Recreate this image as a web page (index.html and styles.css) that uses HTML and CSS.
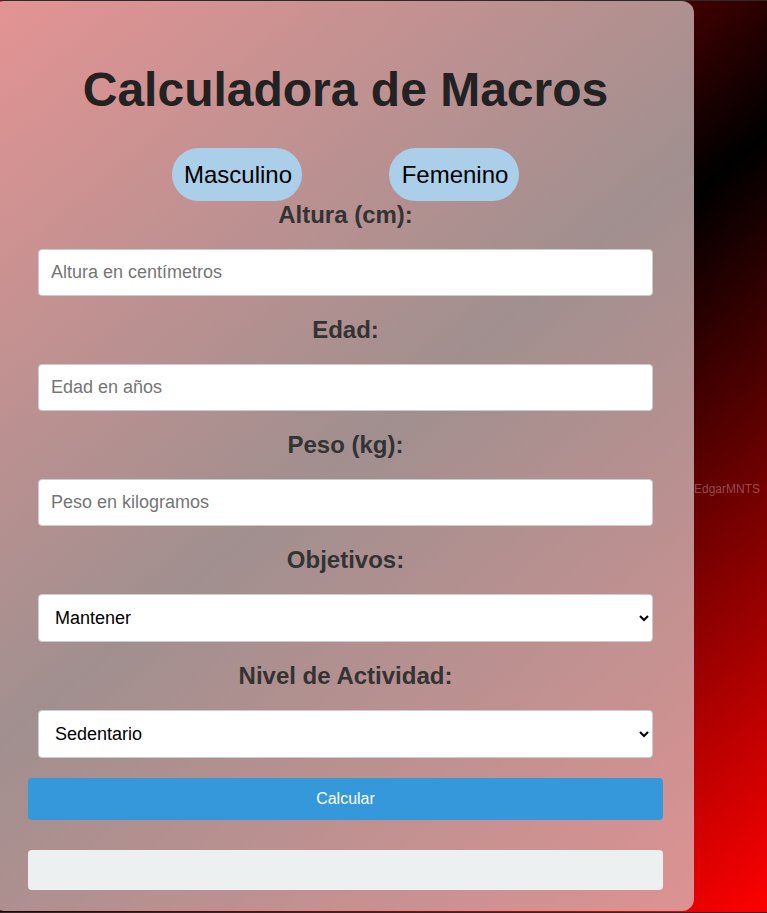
FILE: index.html
```html
<!DOCTYPE html>
<html lang="es">
<head>
<meta charset="utf-8">
<title>Calculadora de Macros</title>
<link rel="stylesheet" href="styles.css">
</head>
<body>
<div class="page">
  <main class="card">
    <h1 class="title">Calculadora de Macros</h1>
    <div class="gender">
      <button class="pill" type="button">Masculino</button>
      <button class="pill" type="button">Femenino</button>
    </div>
    <label class="label" for="altura">Altura (cm):</label>
    <input class="field" id="altura" type="number" placeholder="Altura en centímetros">
    <label class="label" for="edad">Edad:</label>
    <input class="field" id="edad" type="number" placeholder="Edad en años">
    <label class="label" for="peso">Peso (kg):</label>
    <input class="field" id="peso" type="number" placeholder="Peso en kilogramos">
    <label class="label" for="objetivo">Objetivos:</label>
    <select class="field select" id="objetivo">
      <option>Mantener</option>
      <option>Perder peso</option>
      <option>Ganar músculo</option>
    </select>
    <label class="label" for="actividad">Nivel de Actividad:</label>
    <select class="field select" id="actividad">
      <option>Sedentario</option>
      <option>Ligero</option>
      <option>Moderado</option>
      <option>Intenso</option>
    </select>
    <button class="calc" type="button">Calcular</button>
    <div class="result"></div>
  </main>
  <div class="credit">EdgarMNTS</div>
</div>
</body>
</html>
```
FILE: styles.css
```css
* {
  box-sizing: border-box;
}

html, body {
  margin: 0;
  padding: 0;
}

body {
  background: #2b2b2b;
  padding: 1px 0;
  font-family: "Liberation Sans", Arial, sans-serif;
  overflow: hidden;
}

.page {
  height: 911px;
  display: flex;
  align-items: flex-start;
  background: linear-gradient(140deg, #ff0000 0%, #000000 50%, #ff0000 100%);
}

.card {
  flex: none;
  width: 702px;
  height: 910px;
  margin-left: -8px;
  padding: 29px 31px 21px 36px;
  border-radius: 12px;
  background: linear-gradient(140deg, #e49393 0%, #a18f8f 50%, #dd9292 100%);
  display: flex;
  flex-direction: column;
}

.title {
  margin: 32px 0 31px;
  font-size: 48px;
  font-weight: bold;
  color: #222;
  text-align: center;
  line-height: normal;
}

.gender {
  display: flex;
  justify-content: center;
  gap: 87px;
}

.pill {
  width: 130px;
  height: 53px;
  padding: 0 0 0 2px;
  border: none;
  border-radius: 27px;
  background: #abcfe9;
  color: #000;
  font-family: "Liberation Sans", Arial, sans-serif;
  font-size: 24px;
  cursor: pointer;
}

.label {
  display: block;
  margin: 0 0 20px;
  font-size: 24px;
  font-weight: bold;
  color: #333;
  text-align: center;
  line-height: 28px;
}

.field {
  display: block;
  width: 615px;
  height: 47px;
  margin: 0 10px 20px;
  padding: 12px;
  border: 1px solid #ccc;
  border-radius: 4px;
  background: #fff;
  font-family: "Liberation Sans", Arial, sans-serif;
  font-size: 18px;
  color: #000;
}

.field::placeholder {
  color: #757575;
}

.select {
  height: 48px;
  padding: 0 12px;
}

.calc {
  display: block;
  width: 635px;
  height: 42px;
  margin: 0 0 30px;
  padding: 0;
  border: none;
  border-radius: 4px;
  background: #3498db;
  color: #fff;
  font-family: "Liberation Sans", Arial, sans-serif;
  font-size: 16px;
  cursor: pointer;
}

.result {
  width: 635px;
  height: 40px;
  border-radius: 4px;
  background: #ecf0f1;
}

.credit {
  align-self: center;
  margin-top: 64px;
  font-size: 12px;
  color: rgba(255, 255, 255, 0.3);
  white-space: nowrap;
}
```
